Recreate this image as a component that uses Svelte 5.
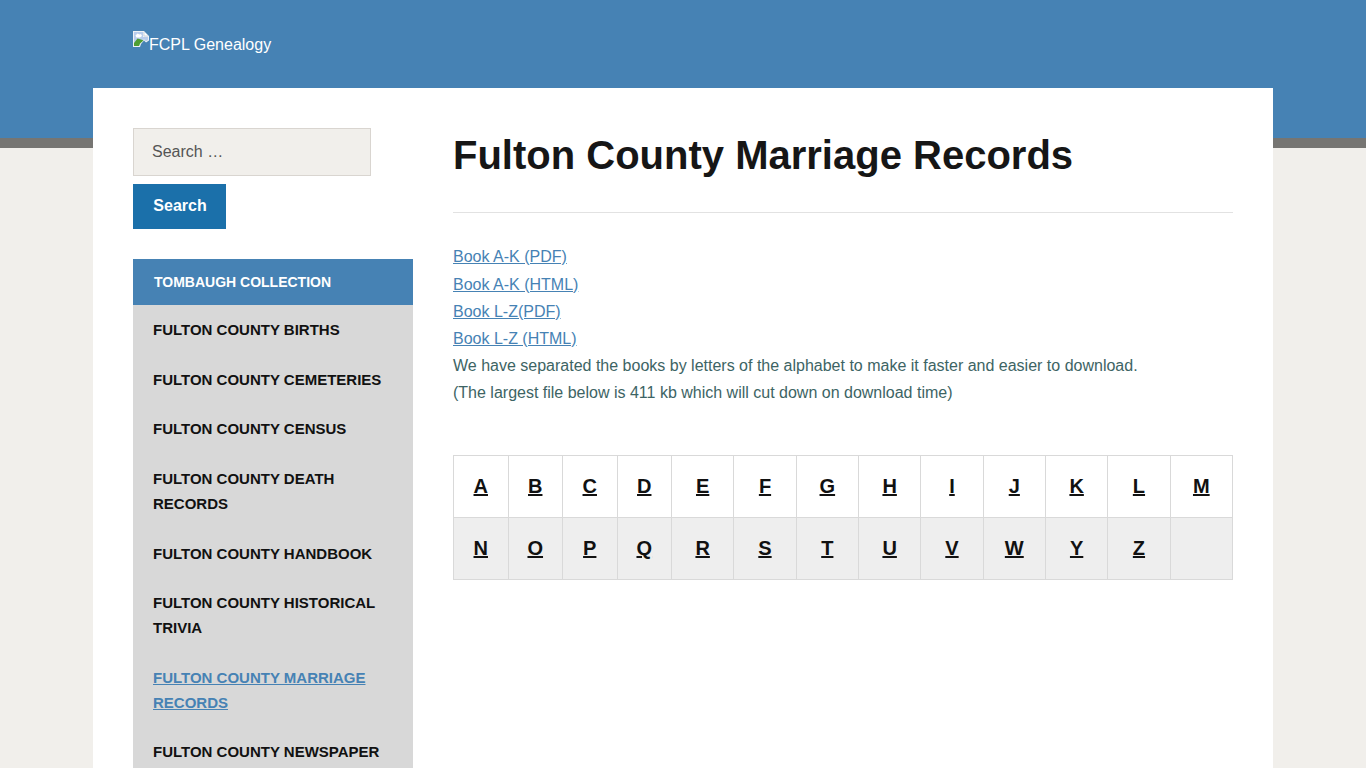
<script>
  const nav = [
    { t: 'Fulton County Births' },
    { t: 'Fulton County Cemeteries' },
    { t: 'Fulton County Census' },
    { t: 'Fulton County Death Records' },
    { t: 'Fulton County Handbook' },
    { t: 'Fulton County Historical Trivia' },
    { t: 'Fulton County Marriage Records', current: true },
    { t: 'Fulton County Newspaper' }
  ];
  const rows = [
    ['A','B','C','D','E','F','G','H','I','J','K','L','M'],
    ['N','O','P','Q','R','S','T','U','V','W','Y','Z','']
  ];
</script>

<div class="page">
  <header class="masthead">
    <a class="logo" href="#top">
      <svg class="broken" width="16" height="16" viewBox="0 0 16 16" aria-hidden="true">
        <path d="M0 0H11L16 5V9.500L13 11.500L11 9.500L8 13L7 16H0Z" fill="#eef1f5"/>
        <path d="M1 1H10V6H15V9L13 10.300L11 8.300L7 12.500L6 15H1Z" fill="#b9cdec"/>
        <path d="M11 1V5H15" fill="#ffffff" stroke="#cfd5dd"/>
        <path d="M2.500 4.500L4.500 2.500L6.500 3.500L8 3L9 5L7 6.500H3.500Z" fill="#ffffff"/>
        <path d="M1 15V12L4.500 7.500L8 8.500L10.500 9.500L7 12.500L6 15Z" fill="#4f9e32"/>
      </svg><span>FCPL Genealogy</span>
    </a>
  </header>

  <div class="container">
    <aside class="sidebar">
      <form class="search" onsubmit={(e) => e.preventDefault()}>
        <input type="search" placeholder="Search …" />
        <button type="submit">Search</button>
      </form>
      <nav class="menu">
        <h2>Tombaugh Collection</h2>
        <ul>
          {#each nav as item}
            <li><a href="#top" class:current={item.current}>{item.t}</a></li>
          {/each}
        </ul>
      </nav>
    </aside>

    <main class="content">
      <h1>Fulton County Marriage Records</h1>
      <hr />
      <p class="body">
        <a href="#top">Book A-K (PDF)</a><br />
        <a href="#top">Book A-K (HTML)</a><br />
        <a href="#top">Book L-Z(PDF)</a><br />
        <a href="#top">Book L-Z (HTML)</a><br />
        We have separated the books by letters of the alphabet to make it faster and easier to download.<br />
        (The largest file below is 411 kb which will cut down on download time)
      </p>
      <table>
        <tbody>
          {#each rows as row}
            <tr>
              {#each row as l}
                <td>{#if l}<a href="#top">{l}</a>{/if}</td>
              {/each}
            </tr>
          {/each}
        </tbody>
      </table>
    </main>
  </div>
</div>

<style>
  :global(body) {
    margin: 0;
    background: #f1efeb;
    font-family: "Liberation Sans", Arial, sans-serif;
    overflow: hidden;
  }
  .page {
    height: 768px;
    overflow: hidden;
    position: relative;
  }
  .masthead {
    box-sizing: border-box;
    height: 148px;
    background: #4682b4;
    border-bottom: 10px solid #767572;
    padding: 31px 133px 0;
  }
  .logo {
    display: inline-flex;
    align-items: flex-start;
    color: #fff;
    text-decoration: none;
    font-size: 16px;
    line-height: 27px;
  }
  .broken { display: block; flex: none; }
  .container {
    box-sizing: border-box;
    width: 1180px;
    margin: -60px 0 0 93px;
    padding: 40px;
    background: #fff;
    display: flex;
    gap: 40px;
    min-height: 700px;
  }
  .sidebar { width: 280px; flex: none; }
  .search { display: flex; flex-direction: column; align-items: flex-start; gap: 8px; margin-bottom: 30px; }
  input {
    box-sizing: border-box;
    width: 238px;
    height: 48px;
    padding: 0 18px;
    background: #f1efeb;
    border: 1px solid #d9d5d0;
    font: 16px "Liberation Sans", Arial, sans-serif;
    color: #444;
    border-radius: 0;
    outline: 0;
  }
  input::placeholder { color: #555; opacity: 1; }
  button {
    box-sizing: border-box;
    width: 93px;
    height: 45px;
    border: 0;
    padding: 0 0 2px 1px;
    background: #1b70aa;
    color: #fff;
    font: bold 16px "Liberation Sans", Arial, sans-serif;
  }
  .menu { background: #d8d8d8; }
  h2 {
    margin: 0;
    height: 46px;
    box-sizing: border-box;
    padding: 0 21px;
    background: #4682b4;
    color: #fff;
    font-size: 14px;
    line-height: 46px;
    font-weight: bold;
    text-transform: uppercase;
  }
  ul { list-style: none; margin: 0; padding: 0 20px; }
  li { padding: 12.3px 0; }
  li a {
    display: block;
    color: #111;
    font-size: 15px;
    font-weight: bold;
    line-height: 25px;
    text-transform: uppercase;
    text-decoration: none;
  }
  li a.current { color: #4682b4; text-decoration: underline; }
  .content { width: 780px; flex: none; }
  h1 {
    margin: 0;
    font-size: 40px;
    line-height: 54px;
    font-weight: bold;
    color: #161616;
  }
  hr {
    border: 0;
    border-top: 1px solid #e2e2e2;
    margin: 30px 0 30.4px;
  }
  .body {
    margin: 0 0 48.6px;
    font-size: 16px;
    line-height: 27.2px;
    color: #3d6464;
  }
  .body a { color: #4682b4; }
  table {
    width: 100%;
    border-collapse: collapse;
    table-layout: fixed;
  }
  td {
    border: 1px solid #d9d9d9;
    text-align: center;
    height: 62px;
    padding: 0;
    box-sizing: border-box;
  }
  td:nth-child(-n+4) { width: 54.5px; }
  tr:nth-child(2) td { background: #eeeeee; }
  td a {
    color: #111;
    font-size: 20px;
    font-weight: bold;
  }
</style>
